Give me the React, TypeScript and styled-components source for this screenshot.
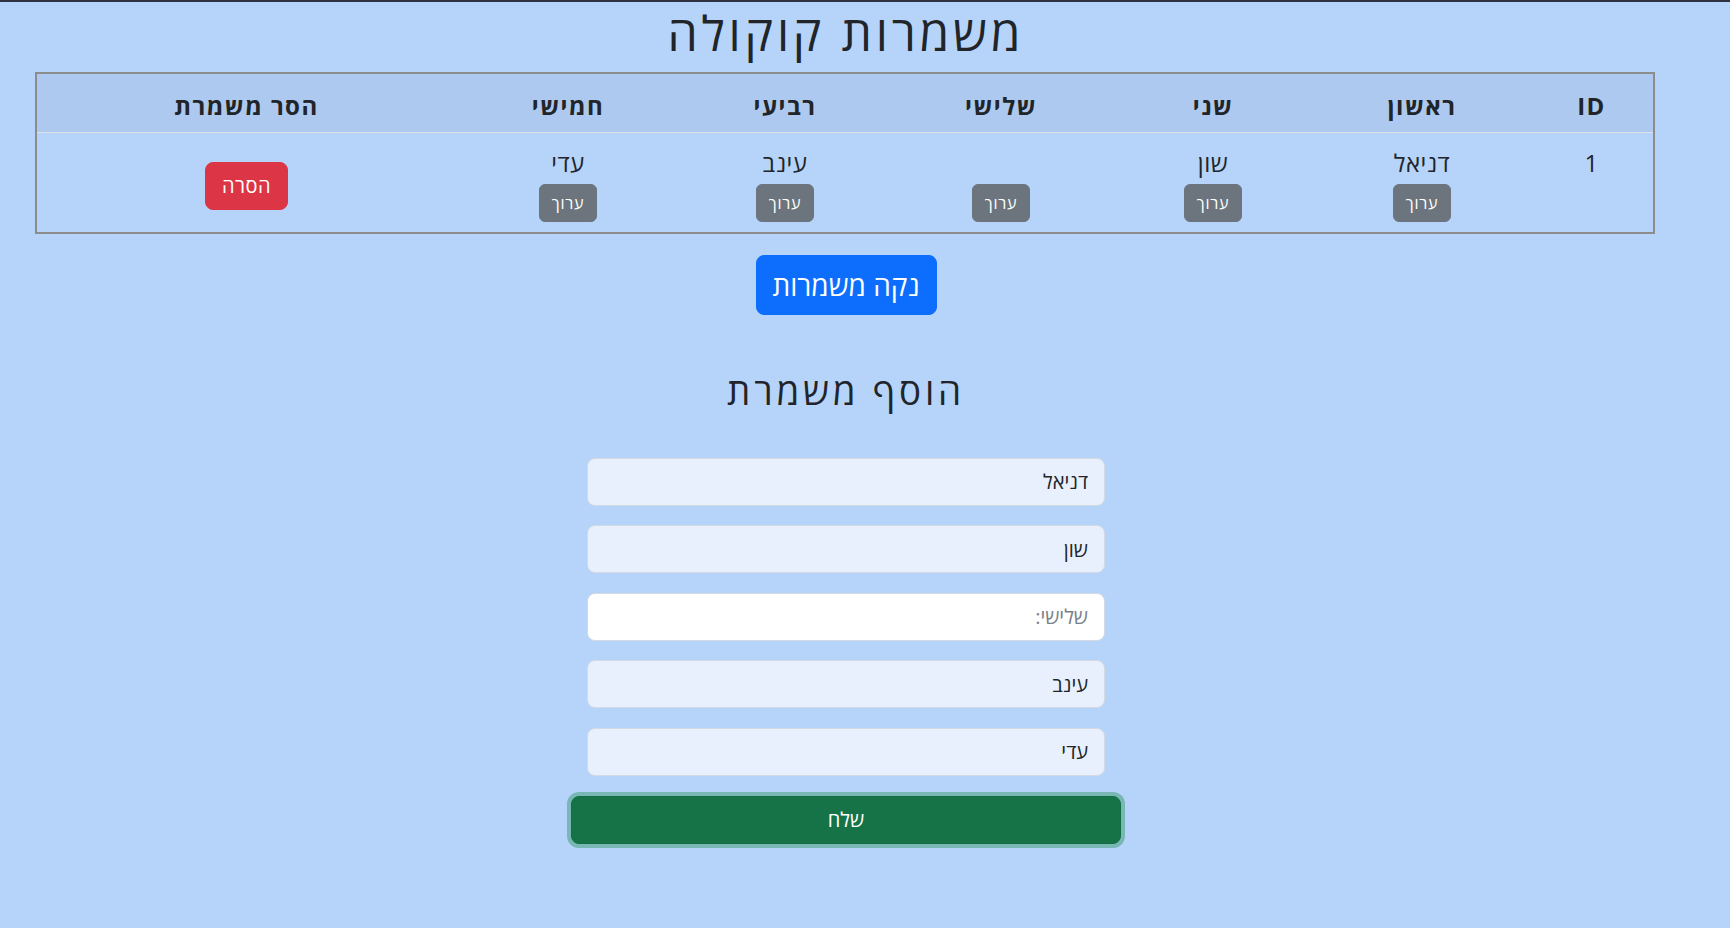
import React from "react";
import styled, {createGlobalStyle} from "styled-components";

const GlobalStyle = createGlobalStyle`
	html, body {
		margin: 0;
		background: #b6d4fa;
	}
	body {
		font-family: "Open Sans", "Liberation Sans", sans-serif;
		color: #212529;
	}
	* {
		box-sizing: border-box;
	}
`;

const Shell = styled.div`
	min-height: 100vh;
	border-top: 2px solid #2d3140;
`;

const Page = styled.div`
	width: 1692px;
	direction: rtl;
	text-align: center;
`;

const Title = styled.h1`
	margin: 2px 0 10px;
	font-size: 48px;
	font-weight: 500;
	line-height: 57.6px;
	letter-spacing: 3.8px;
`;

const Table = styled.table`
	width: 1618px;
	margin: 0 37px;
	table-layout: fixed;
	border-collapse: collapse;
	border: 2px solid #8c8c8c;
	font-size: 24px;
`;

const Col = styled.col<{$w: number}>`
	width: ${p => p.$w}px;
`;

const Th = styled.th`
	padding: 14px 8px 8px;
	line-height: 36px;
	font-weight: 700;
	letter-spacing: 1.5px;
	background: #adc9ef;
	border-top: 1px solid #dee2e6;
	border-bottom: 1px solid #dee2e6;
`;

const Td = styled.td`
	padding: 12px 8px 10px;
	vertical-align: top;
	line-height: 36px;
	letter-spacing: 0.5px;
`;

const Name = styled.div`
	height: 36px;
`;

const tones = {secondary: "#6c757d", danger: "#dc3545", primary: "#0d6efd"};

const Btn = styled.button<{$tone: keyof typeof tones}>`
	font-family: inherit;
	color: #fff;
	border: 1px solid ${p => tones[p.$tone]};
	background: ${p => tones[p.$tone]};
	cursor: pointer;
`;

const EditBtn = styled(Btn)`
	margin-top: 3px;
	padding: 6px 12px;
	font-size: 16px;
	line-height: 24px;
	letter-spacing: 0.8px;
	border-radius: 6px;
`;

const RemoveBtn = styled(Btn)`
	margin-top: 17px;
	padding: 8px 16px;
	font-size: 20px;
	line-height: 30px;
	letter-spacing: 0.5px;
	border-radius: 8px;
`;

const ClearBtn = styled(Btn)`
	margin-top: 21px;
	padding: 8px 16px;
	font-size: 28px;
	line-height: 42px;
	border-radius: 8px;
`;

const SubTitle = styled.h2`
	margin: 54px 0 45px;
	font-size: 36.77px;
	font-weight: 500;
	line-height: 44px;
	letter-spacing: 3.8px;
`;

const Form = styled.form`
	width: 550px;
	margin: 0 auto;
	display: flex;
	flex-direction: column;
	align-items: center;
`;

const Field = styled.input<{$filled?: boolean}>`
	width: 518px;
	height: 48px;
	margin-bottom: 19.6px;
	padding: 8px 16px;
	font-family: inherit;
	font-size: 20px;
	color: #212529;
	direction: rtl;
	border: 1px solid #d3dae2;
	border-radius: 8px;
	background: ${p => (p.$filled ? "#e8f0fe" : "#fff")};
	outline: none;
	&::placeholder {
		color: #7a8189;
	}
`;

const Submit = styled.button`
	width: 550px;
	height: 48px;
	font-family: inherit;
	font-size: 20px;
	color: #fff;
	background: #157347;
	border: 1px solid #146c43;
	border-radius: 8px;
	box-shadow: 0 0 0 4px rgba(60, 153, 110, 0.5);
`;

const widths = [124, 216, 202, 222, 210, 224, 420];
const heads = ["ID", "ראשון", "שני", "שלישי", "רביעי", "חמישי", "הסר משמרת"];
const shift = ["דניאל", "שון", "", "עינב", "עדי"];
const fields = [
	{value: "דניאל", placeholder: "ראשון:"},
	{value: "שון", placeholder: "שני:"},
	{value: "", placeholder: "שלישי:"},
	{value: "עינב", placeholder: "רביעי:"},
	{value: "עדי", placeholder: "חמישי:"}
];

export default function App() {
	return (
		<>
			<GlobalStyle />
			<Shell>
				<Page>
					<Title>משמרות קוקולה</Title>
					<Table>
						<colgroup>
							{widths.map((w, i) => (
								<Col key={i} $w={w} />
							))}
						</colgroup>
						<thead>
							<tr>
								{heads.map(h => (
									<Th key={h}>{h}</Th>
								))}
							</tr>
						</thead>
						<tbody>
							<tr>
								<Td>1</Td>
								{shift.map((name, i) => (
									<Td key={i}>
										<Name>{name}</Name>
										<EditBtn $tone="secondary">ערוך</EditBtn>
									</Td>
								))}
								<Td>
									<RemoveBtn $tone="danger">הסרה</RemoveBtn>
								</Td>
							</tr>
						</tbody>
					</Table>
					<ClearBtn $tone="primary">נקה משמרות</ClearBtn>
					<SubTitle>הוסף משמרת</SubTitle>
					<Form onSubmit={e => e.preventDefault()}>
						{fields.map(f => (
							<Field key={f.placeholder} $filled={!!f.value} defaultValue={f.value} placeholder={f.placeholder} />
						))}
						<Submit type="submit">שלח</Submit>
					</Form>
				</Page>
			</Shell>
		</>
	);
}
